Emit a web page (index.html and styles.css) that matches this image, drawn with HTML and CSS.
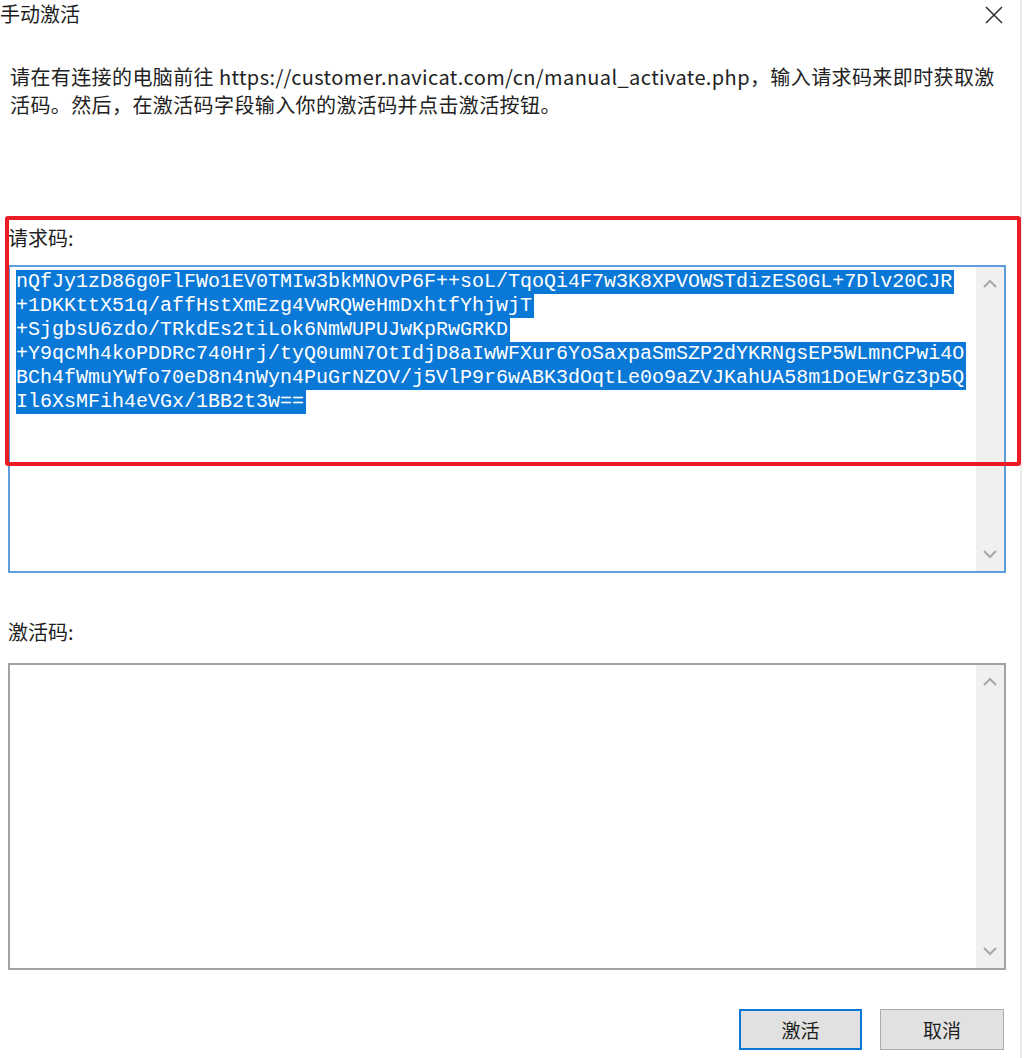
FILE: index.html
```html
<!DOCTYPE html>
<html lang="zh-CN">
<head>
  <meta charset="UTF-8" />
  <title>手动激活</title>
  <link rel="stylesheet" href="styles.css">
</head>
<body>
  <div class="dialog">
    <div class="titlebar">
      <span class="title">手动激活</span>
      <svg class="close" width="18" height="18" viewBox="0 0 18 18">
        <path d="M1 1 L17 17 M17 1 L1 17" stroke="#333" stroke-width="1.6" fill="none"/>
      </svg>
    </div>

    <p class="intro">请在有连接的电脑前往 https://customer.navicat.com/cn/manual_activate.php，输入请求码来即时获取激<br>活码。然后，在激活码字段输入你的激活码并点击激活按钮。</p>

    <div class="field-label first">请求码:</div>
    <div class="code-box focused">
      <div class="code-text">
        <div class="code-line"><span class="sel">nQfJy1zD86g0FlFWo1EV0TMIw3bkMNOvP6F++soL/TqoQi4F7w3K8XPVOWSTdizES0GL+7Dlv20CJR</span></div>
        <div class="code-line"><span class="sel">+1DKKttX51q/affHstXmEzg4VwRQWeHmDxhtfYhjwjT</span></div>
        <div class="code-line"><span class="sel">+SjgbsU6zdo/TRkdEs2tiLok6NmWUPUJwKpRwGRKD</span></div>
        <div class="code-line"><span class="sel">+Y9qcMh4koPDDRc740Hrj/tyQ0umN7OtIdjD8aIwWFXur6YoSaxpaSmSZP2dYKRNgsEP5WLmnCPwi4O</span></div>
        <div class="code-line"><span class="sel">BCh4fWmuYWfo70eD8n4nWyn4PuGrNZOV/j5VlP9r6wABK3dOqtLe0o9aZVJKahUA58m1DoEWrGz3p5Q</span></div>
        <div class="code-line"><span class="sel">Il6XsMFih4eVGx/1BB2t3w==</span></div>
      </div>
      <div class="scrollbar">
        <svg width="14" height="10" viewBox="0 0 14 10"><path d="M1 8 L7 2 L13 8" stroke="#a8a8a8" stroke-width="2" fill="none"/></svg>
        <svg width="14" height="10" viewBox="0 0 14 10"><path d="M1 2 L7 8 L13 2" stroke="#a8a8a8" stroke-width="2" fill="none"/></svg>
      </div>
    </div>

    <div class="field-label second">激活码:</div>
    <div class="code-box plain">
      <div class="code-text"></div>
      <div class="scrollbar">
        <svg width="14" height="10" viewBox="0 0 14 10"><path d="M1 8 L7 2 L13 8" stroke="#a8a8a8" stroke-width="2" fill="none"/></svg>
        <svg width="14" height="10" viewBox="0 0 14 10"><path d="M1 2 L7 8 L13 2" stroke="#a8a8a8" stroke-width="2" fill="none"/></svg>
      </div>
    </div>

    <div class="buttons">
      <button class="btn default">激活</button>
      <button class="btn">取消</button>
    </div>

    <!-- annotation box drawn over the request code -->
    <div class="highlight-box"></div>
  </div>
</body>
</html>
```

FILE: styles.css
```css
body {
  margin: 0;
  background-color: #ffffff;
  font-family: "Noto Sans CJK SC", "Noto Sans", sans-serif;
  color: #1e1e1e;
}

.dialog {
  position: relative;
  width: 1020px;
  height: 1058px;
  border-right: 2px solid #ececec;
  background-color: #ffffff;
  display: flex;
  flex-direction: column;
}

.titlebar {
  display: flex;
  justify-content: space-between;
  align-items: center;
  height: 28px;
  padding-right: 17px;
}

.title {
  font-size: 20px;
  line-height: 26px;
}

.close {
  margin-top: 2px;
}

.intro {
  margin: 35px 0 0 0;
  padding-left: 10px;
  font-size: 20px;
  line-height: 28px;
  letter-spacing: 0.4px;
  white-space: nowrap;
  color: #222;
}

.field-label {
  font-size: 20px;
  line-height: 28px;
  padding-left: 8px;
}

.field-label.first {
  margin-top: 105px;
}

.field-label.second {
  margin-top: 45px;
}

.code-box {
  display: flex;
  box-sizing: border-box;
  margin: 0 14px 0 8px;
  background-color: #fff;
}

.code-box.focused {
  margin-top: 13px;
  height: 308px;
  border: 2px solid #5d9fdc;
}

.code-box.plain {
  margin-top: 17px;
  height: 307px;
  border: 2px solid #a2a2a2;
}

.code-text {
  flex: 1;
  padding: 3px 6px 0 6px;
  font-family: "Liberation Mono", "DejaVu Sans Mono", monospace;
  font-size: 20px;
  line-height: 24px;
  overflow: hidden;
}

.code-line {
  height: 24px;
  white-space: pre;
}

.sel {
  display: inline-block;
  background-color: #0a78d6;
  color: #ffffff;
  line-height: 24px;
  padding-right: 2px;
}

.scrollbar {
  width: 28px;
  background-color: #f0f0f0;
  display: flex;
  flex-direction: column;
  justify-content: space-between;
  align-items: center;
  padding: 12px 0 12px 0;
}

.buttons {
  display: flex;
  justify-content: flex-end;
  gap: 18px;
  margin-top: 39px;
  padding-right: 16px;
}

.btn {
  box-sizing: border-box;
  width: 124px;
  height: 41px;
  background-color: #e1e1e1;
  border: 1px solid #adadad;
  font-family: "Noto Sans CJK SC", "Noto Sans", sans-serif;
  font-size: 19px;
  color: #1e1e1e;
  padding: 0;
}

.btn.default {
  width: 123px;
  border: 2px solid #0a78d6;
}

.highlight-box {
  position: absolute;
  left: 5px;
  top: 216px;
  width: 1016px;
  height: 250px;
  box-sizing: border-box;
  border: 4px solid #ec1c24;
  border-radius: 3px;
}
```
